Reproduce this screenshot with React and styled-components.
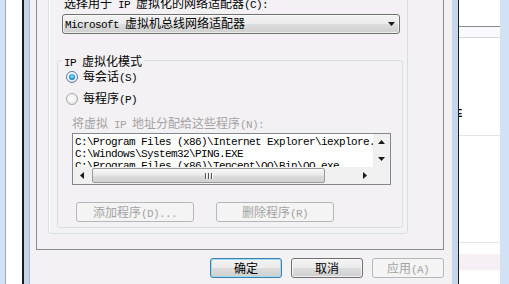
import React from 'react';
import styled, { createGlobalStyle, css } from 'styled-components';

const GlobalStyle = createGlobalStyle`
  html, body {
    margin: 0;
    padding: 0;
    background: #ffffff;
  }
  body {
    font-family: "Noto Sans CJK SC", sans-serif;
    font-size: 12px;
    color: #000;
  }
  * { box-sizing: border-box; }
`;

// half-width latin runs, SimSun style: 6px per char
const Half = styled.span`
  font-family: "Liberation Mono", monospace;
  font-size: 11px;
  letter-spacing: -0.6px;
`;

function Txt({ children }) {
  const parts = String(children).split(/([\x20-\x7e]+)/);
  return parts.map((p, i) => (i % 2 ? <Half key={i}>{p}</Half> : p));
}

const Screen = styled.div`
  display: flex;
  width: 509px;
  height: 284px;
  overflow: hidden;
`;

const BackLeft = styled.div`
  display: flex;
  width: 22px;
  flex: none;
`;

const BackFrame = styled.div`
  width: ${(p) => p.$w}px;
  flex: none;
  background: #d2e1f3;
`;

const BackPane = styled.div`
  flex: 1;
  background: #ffffff;
  border-left: 1px solid #9eaabb;
`;

const Dialog = styled.div`
  display: flex;
  width: 437px;
  flex: none;
  border-left: 2px solid #1c1c1c;
  border-right: 1px solid #1c1c1c;
  background: #c5d5ea;
  padding: 0 6px 0 5px;
`;

const Body = styled.div`
  flex: 1;
  display: flex;
  flex-direction: column;
  background: #f4f1f4;
  border-left: 1px solid #a9b8cd;
  padding: 0 8px 0 6px;
`;

const Panel = styled.div`
  margin-top: -40px;
  width: 408px;
  border: 1px solid #898c95;
  padding: 14px 35px 15px 11px;
`;

const OuterGroup = styled.div`
  width: 360px;
  border: 1px solid #d5dfe5;
  border-radius: 3px;
  box-shadow: inset 1px 1px 0 #ffffff;
  padding: 20px 0 5px 0;
`;

const FieldLabel = styled.div`
  margin-left: 15px;
  line-height: 13px;
  height: 13px;
  white-space: nowrap;
  color: ${(p) => (p.$disabled ? '#a3a3a3' : '#000')};
`;

const Combo = styled.div`
  display: flex;
  align-items: center;
  justify-content: space-between;
  margin: 5px 0 0 13px;
  width: 338px;
  height: 20px;
  border: 1px solid #707070;
  border-radius: 3px;
  background: linear-gradient(#f2f2f2 0%, #ebebeb 50%, #dddddd 51%, #cfcfcf 100%);
  box-shadow: inset 0 0 0 1px rgba(255, 255, 255, 0.6);
  padding: 0 4px 0 2px;
`;

const ComboText = styled.span`
  line-height: 13px;
  white-space: nowrap;
`;

const GroupBox = styled.fieldset`
  margin: 20px 0 0 8px;
  width: 346px;
  min-width: 0;
  padding: 3px 0 5px 0;
  border: 1px solid #d5dfe5;
  border-radius: 3px;
`;

const Legend = styled.legend`
  margin-left: 4px;
  padding: 0 2px;
  height: 13px;
  line-height: 13px;
  white-space: nowrap;
`;

const RadioRow = styled.div`
  display: flex;
  align-items: center;
  gap: 5px;
  height: 13px;
  margin: ${(p) => (p.$first ? '0' : '9px')} 0 0 8px;
  line-height: 13px;
`;

const Radio = styled.span`
  position: relative;
  width: 12px;
  height: 12px;
  flex: none;
  border-radius: 50%;
  border: 1px solid ${(p) => (p.$checked ? '#5a7aa3' : '#a7a7a7')};
  background: radial-gradient(circle at 40% 35%, #ffffff 0%, #f2f2f2 50%, #d6d6d6 100%);
  ${(p) =>
    p.$checked &&
    css`
      &::after {
        content: '';
        position: absolute;
        left: 2px;
        top: 2px;
        width: 6px;
        height: 6px;
        border-radius: 50%;
        background: radial-gradient(circle at 50% 40%, #a6ecff 0%, #2fa3e3 45%, #164e8c 100%);
      }
    `}
`;

const SubLabel = styled(FieldLabel)`
  margin: 11px 0 0 14px;
`;

const ListBox = styled.div`
  display: grid;
  grid-template-columns: 1fr 17px;
  grid-template-rows: 1fr 17px;
  margin: 4px 0 0 14px;
  width: 319px;
  height: 52px;
  border: 1px solid #828790;
  background: #ffffff;
`;

const ListLines = styled.div`
  overflow: hidden;
  padding: 2px 0 0 2px;
`;

const ListLine = styled(Half)`
  display: block;
  line-height: 12px;
  height: 12px;
  white-space: pre;
`;

const VScroll = styled.div`
  display: flex;
  flex-direction: column;
  justify-content: space-between;
  background: #f0f0f0;
`;

const HScroll = styled.div`
  display: flex;
  align-items: center;
  background: #f0f0f0;
`;

const ScrollCorner = styled.div`
  background: #f0f0f0;
`;

const ArrowBtn = styled.div`
  display: flex;
  align-items: center;
  justify-content: center;
  width: 17px;
  height: ${(p) => p.$h || 17}px;
  flex: none;
`;

const Thumb = styled.div`
  display: flex;
  align-items: center;
  justify-content: center;
  gap: 1px;
  width: 233px;
  height: 15px;
  margin-left: 2px;
  border: 1px solid #9a9a9a;
  border-radius: 2px;
  background: linear-gradient(#f6f6f6 0%, #ececec 45%, #dcdcdc 55%, #d2d2d2 100%);
`;

const Grip = styled.span`
  width: 1px;
  height: 6px;
  background: #555;
  box-shadow: 1px 0 0 #fafafa;
  margin-right: 1px;
`;

const Track = styled.div`
  flex: 1;
`;

const ButtonRow = styled.div`
  display: flex;
  gap: ${(p) => p.$gap}px;
  margin: ${(p) => p.$margin};
  justify-content: ${(p) => p.$justify || 'flex-start'};
`;

const Button = styled.button`
  width: ${(p) => p.$w}px;
  height: 20px;
  padding: 0;
  font-family: inherit;
  font-size: 12px;
  line-height: 18px;
  color: #000;
  border: 1px solid #707070;
  border-radius: 3px;
  background: linear-gradient(#f2f2f2 0%, #ebebeb 50%, #dddddd 51%, #cfcfcf 100%);
  box-shadow: inset 0 0 0 1px rgba(255, 255, 255, 0.7);
  white-space: nowrap;

  ${(p) =>
    p.$primary &&
    css`
      border-color: #3c7fb1;
      box-shadow: inset 0 0 0 1px #9fdcf6;
    `}

  &:disabled {
    color: #a3a3a3;
    border-color: #b5b8ba;
    background: #f4f4f4;
    box-shadow: none;
  }
`;

const BackRight = styled.div`
  display: flex;
  flex: none;
  width: 50px;
`;

const BackList = styled.div`
  display: flex;
  flex-direction: column;
  width: 41px;
  flex: none;
  background: #ffffff;
  overflow: hidden;
`;

const BackRow = styled.div`
  height: ${(p) => p.$h}px;
  flex: none;
  background: ${(p) => p.$bg || 'transparent'};
  border-bottom: ${(p) => (p.$line ? `1px solid ${p.$line}` : 'none')};
  font-family: "Liberation Sans", sans-serif;
  font-size: 11px;
  line-height: 11px;
`;

const BackGlyph = styled.span`
  display: block;
  margin: 70px 0 0 -4px;
  font-weight: bold;
`;

const Arrow = ({ dir }) => {
  const d = {
    up: 'M0 4 L3.5 0 L7 4 Z',
    down: 'M0 0 L7 0 L3.5 4 Z',
    left: 'M4 0 L4 7 L0 3.5 Z',
    right: 'M0 0 L4 3.5 L0 7 Z',
  }[dir];
  const w = dir === 'up' || dir === 'down' ? 7 : 4;
  const h = dir === 'up' || dir === 'down' ? 4 : 7;
  return (
    <svg width={w} height={h} viewBox={`0 0 ${w} ${h}`}>
      <path d={d} fill="#1a1a1a" />
    </svg>
  );
};

const programs = [
  'C:\\Program Files (x86)\\Internet Explorer\\iexplore.exe',
  'C:\\Windows\\System32\\PING.EXE',
  'C:\\Program Files (x86)\\Tencent\\QQ\\Bin\\QQ.exe',
];

export default function App() {
  return (
    <>
      <GlobalStyle />
      <Screen>
        <BackLeft>
          <BackFrame $w={5} />
          <BackPane />
        </BackLeft>

        <Dialog>
          <Body>
            <Panel>
              <OuterGroup>
                <FieldLabel>
                  <Txt>选择用于 IP 虚拟化的网络适配器(C):</Txt>
                </FieldLabel>
                <Combo>
                  <ComboText>
                    <Txt>Microsoft 虚拟机总线网络适配器</Txt>
                  </ComboText>
                  <Arrow dir="down" />
                </Combo>

                <GroupBox>
                  <Legend>
                    <Txt>IP 虚拟化模式</Txt>
                  </Legend>
                  <RadioRow $first>
                    <Radio $checked />
                    <span><Txt>每会话(S)</Txt></span>
                  </RadioRow>
                  <RadioRow>
                    <Radio />
                    <span><Txt>每程序(P)</Txt></span>
                  </RadioRow>

                  <SubLabel $disabled>
                    <Txt>将虚拟 IP 地址分配给这些程序(N):</Txt>
                  </SubLabel>
                  <ListBox>
                    <ListLines>
                      {programs.map((p) => (
                        <ListLine key={p}>{p}</ListLine>
                      ))}
                    </ListLines>
                    <VScroll>
                      <ArrowBtn $h={16}><Arrow dir="up" /></ArrowBtn>
                      <ArrowBtn $h={16}><Arrow dir="down" /></ArrowBtn>
                    </VScroll>
                    <HScroll>
                      <ArrowBtn><Arrow dir="left" /></ArrowBtn>
                      <Thumb>
                        <Grip />
                        <Grip />
                        <Grip />
                      </Thumb>
                      <Track />
                      <ArrowBtn><Arrow dir="right" /></ArrowBtn>
                    </HScroll>
                    <ScrollCorner />
                  </ListBox>

                  <ButtonRow $gap={22} $margin="17px 0 0 18px">
                    <Button $w={118} disabled>
                      <Txt>添加程序(D)...</Txt>
                    </Button>
                    <Button $w={118} disabled>
                      <Txt>删除程序(R)</Txt>
                    </Button>
                  </ButtonRow>
                </GroupBox>
              </OuterGroup>
            </Panel>

            <ButtonRow $gap={9} $margin="8px 0 0 0" $justify="flex-end">
              <Button $w={72} $primary>确定</Button>
              <Button $w={72}>取消</Button>
              <Button $w={72} disabled>
                <Txt>应用(A)</Txt>
              </Button>
            </ButtonRow>
          </Body>
        </Dialog>

        <BackRight>
          <BackList>
            <BackRow $h={27} $line="#8c8c8c" />
            <BackRow $h={11} $bg="#f8fafd" $line="#d6d6d6" />
            <BackRow $h={98} $line="#e2e2e2">
              <BackGlyph>E</BackGlyph>
            </BackRow>
            <BackRow $h={107} $line="#e6e6e6" />
            <BackRow $h={11} />
            <BackRow $h={16} $bg="#f6eff3" />
          </BackList>
          <BackFrame $w={9} />
        </BackRight>
      </Screen>
    </>
  );
}
